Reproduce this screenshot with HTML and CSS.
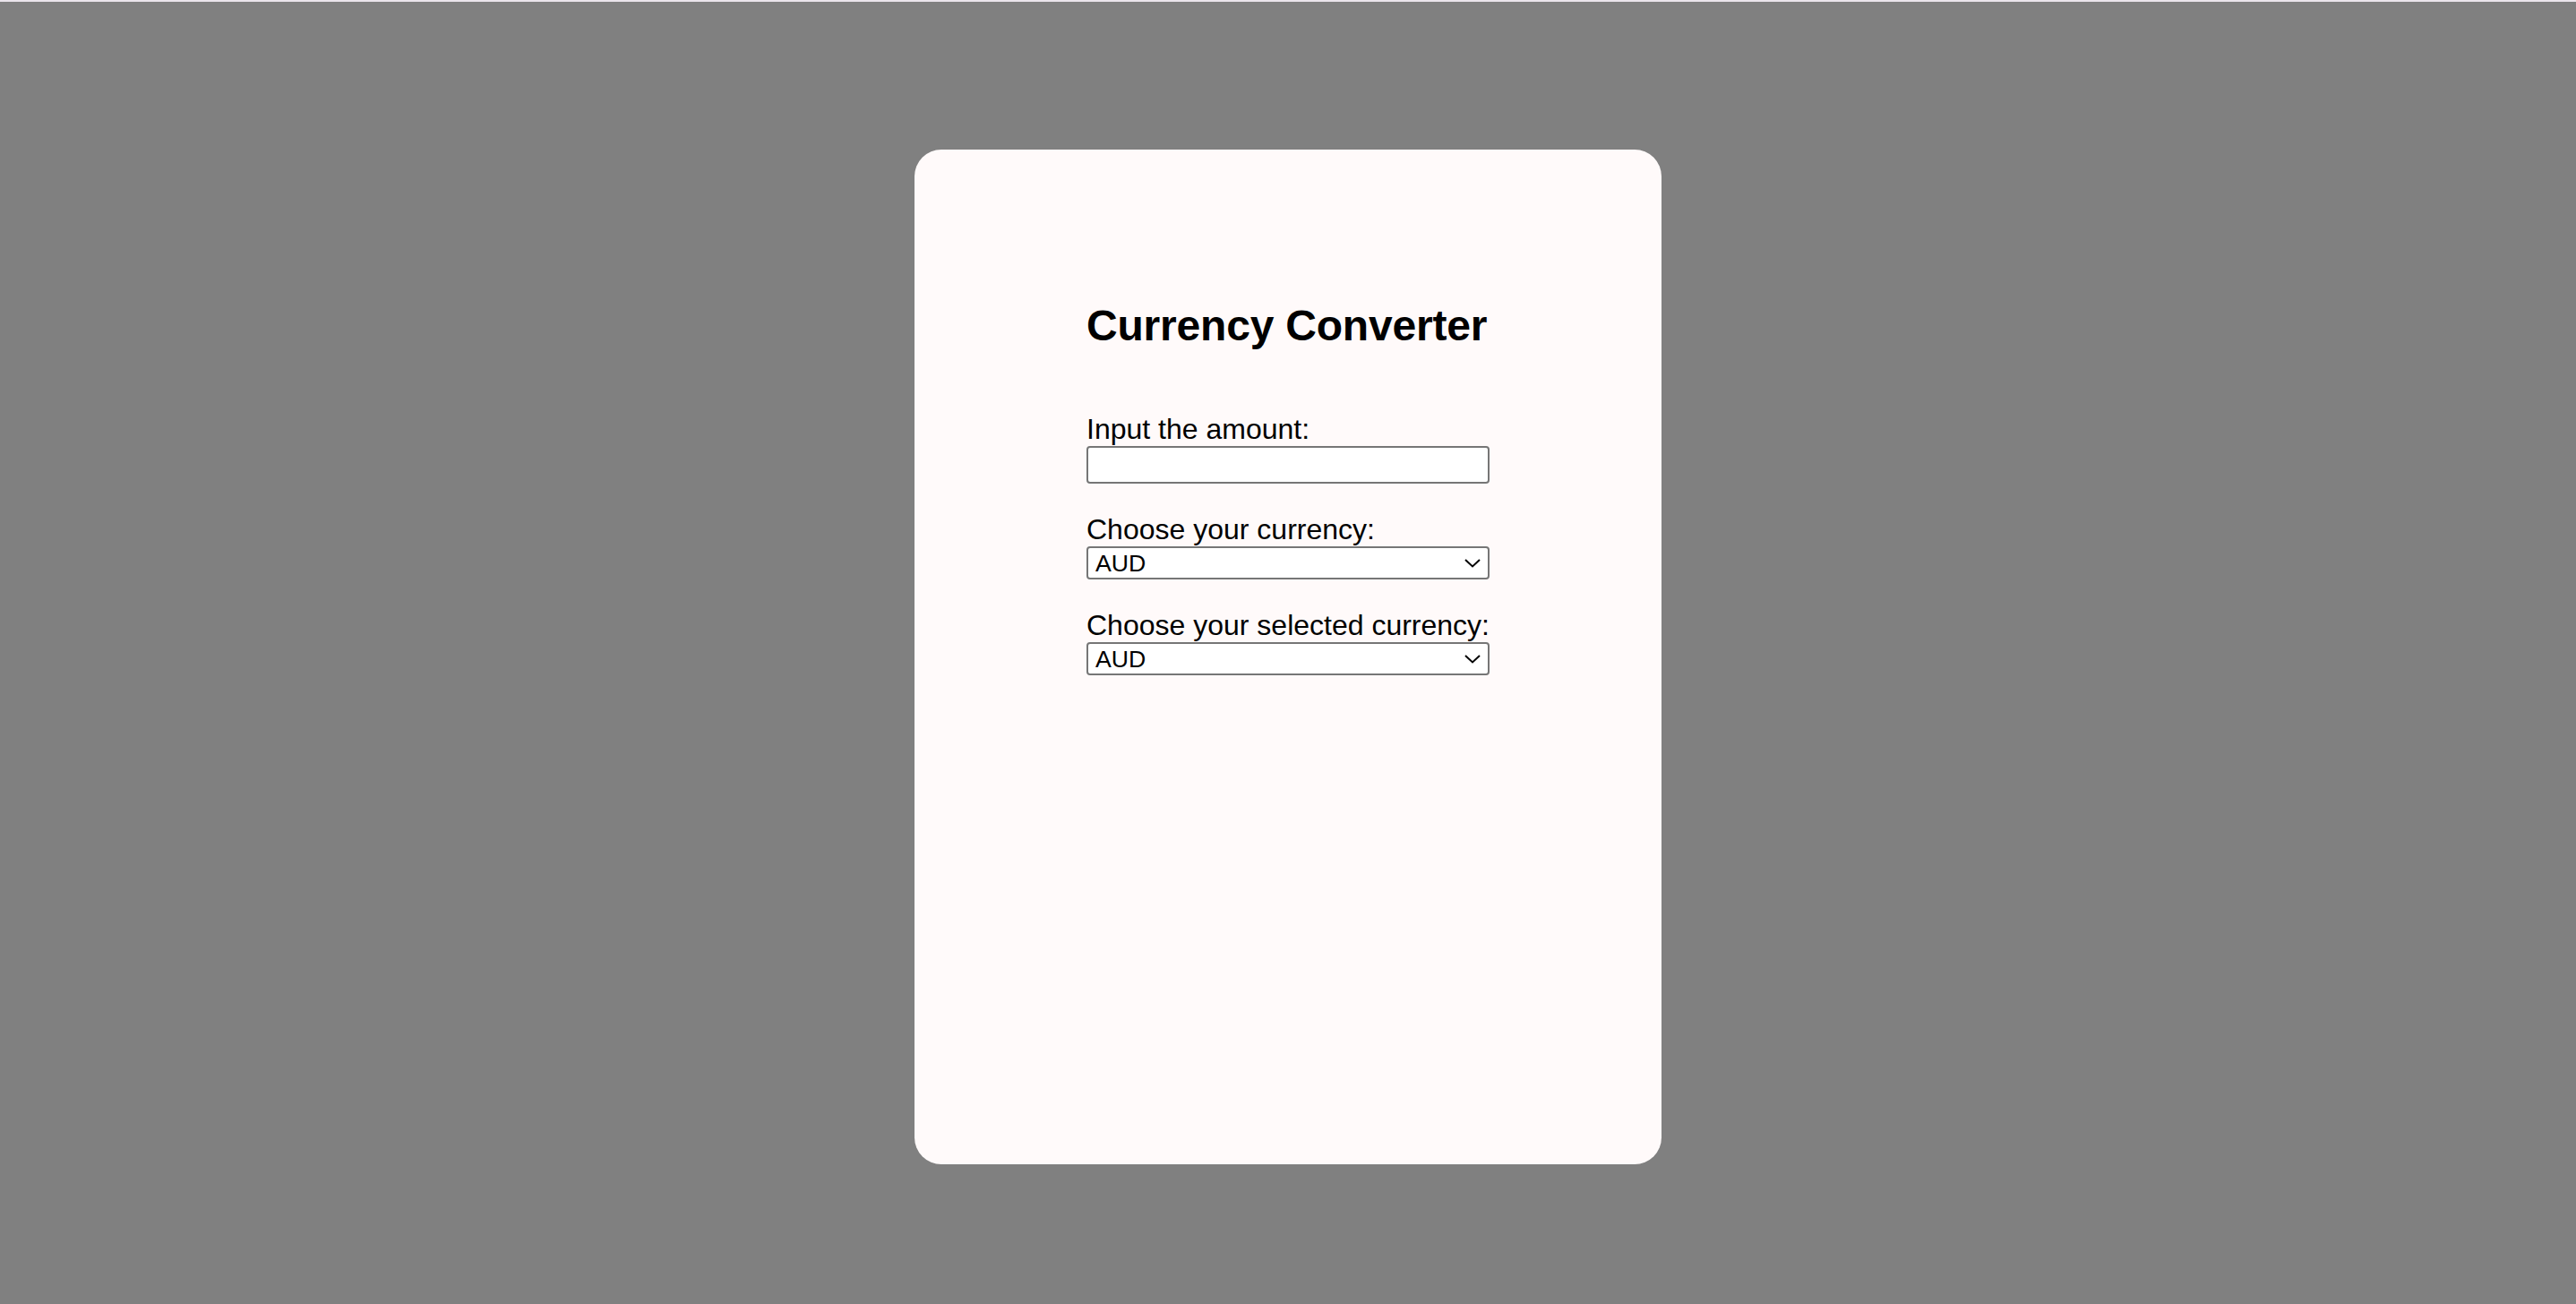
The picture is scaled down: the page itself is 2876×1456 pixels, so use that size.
FILE: index.html
```html
<!DOCTYPE html>
<html lang="en">
<head>
<meta charset="utf-8">
<title>Currency Converter</title>
<link rel="stylesheet" href="styles.css">
</head>
<body>
  <main class="card">
    <h1 class="title">Currency Converter</h1>
    <div class="field">
      <label class="label" for="amount">Input the amount:</label>
      <input class="text-input" id="amount" type="text">
    </div>
    <div class="field">
      <label class="label" for="from">Choose your currency:</label>
      <div class="select-wrap">
        <select class="select" id="from">
          <option>AUD</option>
          <option>USD</option>
          <option>EUR</option>
        </select>
        <svg class="chevron" width="18" height="10" viewBox="0 0 18 10"><path d="M1 1 L9 8.5 L17 1" fill="none" stroke="#000" stroke-width="2"/></svg>
      </div>
    </div>
    <div class="field">
      <label class="label" for="to">Choose your selected currency:</label>
      <div class="select-wrap">
        <select class="select" id="to">
          <option>AUD</option>
          <option>USD</option>
          <option>EUR</option>
        </select>
        <svg class="chevron" width="18" height="10" viewBox="0 0 18 10"><path d="M1 1 L9 8.5 L17 1" fill="none" stroke="#000" stroke-width="2"/></svg>
      </div>
    </div>
  </main>
</body>
</html>
```

FILE: styles.css
```css
html {
  background: #808080;
  border-top: 2px solid #ebe5ec;
}

body {
  margin: 0;
  padding-top: 165px;
  font-family: "Liberation Sans", Arial, sans-serif;
  color: #000;
}

.card {
  box-sizing: border-box;
  width: 834px;
  height: 1133px;
  margin: 0 auto;
  padding: 169px 192px 0;
  background: #fffafa;
  border-radius: 30px;
}

.title {
  margin: 0 0 70px;
  font-size: 48px;
  font-weight: bold;
  line-height: 55px;
  white-space: nowrap;
  letter-spacing: -0.2px;
}

.field {
  margin-bottom: 33px;
}

.label {
  display: block;
  font-size: 32px;
  line-height: 37px;
}

.text-input {
  display: block;
  box-sizing: border-box;
  width: 100%;
  height: 42px;
  margin: 0;
  padding: 2px 4px;
  border: 2px solid #767676;
  border-radius: 4px;
  background: #fff;
  font-family: "Liberation Sans", Arial, sans-serif;
  font-size: 26.67px;
  outline: none;
}

.select-wrap {
  position: relative;
}

.select {
  display: block;
  box-sizing: border-box;
  width: 100%;
  height: 37px;
  margin: 0;
  padding: 0 8px;
  border: 2px solid #767676;
  border-radius: 4px;
  background: #fff;
  color: #000;
  font-family: "Liberation Sans", Arial, sans-serif;
  font-size: 26.67px;
  -webkit-appearance: none;
  appearance: none;
  outline: none;
}

.chevron {
  position: absolute;
  right: 10px;
  top: 14px;
  pointer-events: none;
}
```
